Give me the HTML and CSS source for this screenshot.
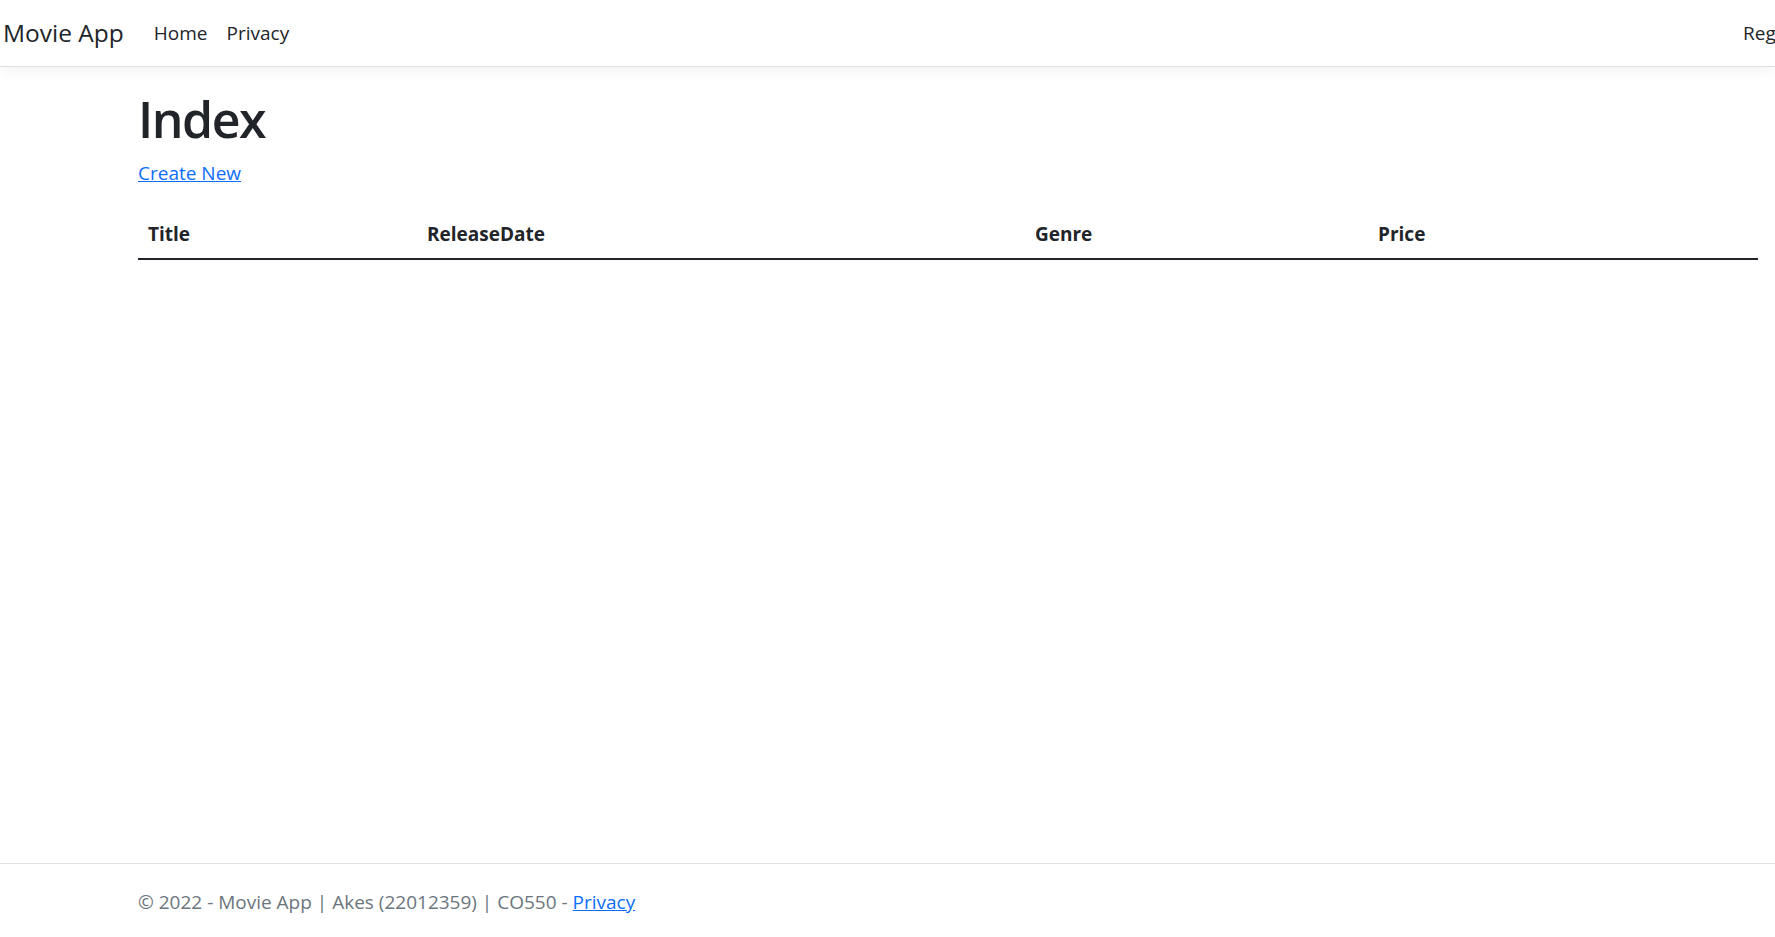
FILE: index.html
```html
<!DOCTYPE html>
<html lang="en">
<head>
<meta charset="utf-8">
<title>Index - Movie App</title>
<link rel="stylesheet" href="styles.css">
</head>
<body>
<div class="page">
  <header class="navbar">
    <a class="brand" href="#">Movie App</a>
    <nav class="nav-links">
      <a class="nav-link" href="#">Home</a>
      <a class="nav-link" href="#">Privacy</a>
    </nav>
    <div class="nav-right">
      <a class="nav-link" href="#">Register</a>
    </div>
  </header>
  <main class="main">
    <h1 class="title">Index</h1>
    <p class="create"><a href="#">Create New</a></p>
    <table class="table">
      <thead>
        <tr>
          <th class="col-title">Title</th>
          <th class="col-date">ReleaseDate</th>
          <th class="col-genre">Genre</th>
          <th class="col-price">Price</th>
        </tr>
      </thead>
      <tbody></tbody>
    </table>
  </main>
  <footer class="footer">
    <div class="footer-inner">&copy; 2022 - Movie App | Akes (22012359) | CO550 - <a href="#">Privacy</a></div>
  </footer>
</div>
</body>
</html>
```
FILE: styles.css
```css
html, body {
  margin: 0;
  padding: 0;
  overflow: hidden;
}
body {
  font-family: "Open Sans", "Noto Sans", "Liberation Sans", sans-serif;
  font-size: 19px;
  color: #212529;
  background: #fff;
  width: 1775px;
  height: 937px;
}
.page {
  display: flex;
  flex-direction: column;
  height: 937px;
}
.navbar {
  flex: 0 0 auto;
  height: 67px;
  border-bottom: 1px solid #dfdfdf;
  box-shadow: 0 4px 14px rgba(0, 0, 0, 0.05);
  display: flex;
  align-items: center;
  padding: 0 0 0 3px;
  box-sizing: border-box;
  position: relative;
  z-index: 1;
}
.brand {
  font-size: 24.5px;
  color: #212529;
  text-decoration: none;
  margin-right: 30px;
  padding-bottom: 1px;
}
.nav-links {
  display: flex;
  gap: 19px;
}
.nav-link {
  color: #212529;
  text-decoration: none;
  font-size: 19px;
}
.nav-right {
  margin-left: auto;
  width: 32px;
  overflow: hidden;
  white-space: nowrap;
}
.main {
  flex: 1 1 auto;
  padding: 0 17px 0 138px;
}
.title {
  font-size: 50px;
  font-weight: 600;
  margin: 22px 0 0 0;
  line-height: 1.2;
  letter-spacing: -1.5px;
}
.create {
  margin: 10px 0 0 0;
  line-height: 1.5;
}
.create a {
  color: #0d6efd;
}
.table {
  border-collapse: collapse;
  width: 1620px;
  margin-top: 17px;
}
.table th {
  text-align: left;
  font-weight: 700;
  padding: 15.5px 10px 9px 10px;
  border-bottom: 2px solid #212529;
  line-height: 1.5;
}
.col-title { width: 259px; }
.col-date { width: 588px; }
.col-genre { width: 323px; }
.footer {
  flex: 0 0 auto;
  height: 74px;
  border-top: 1px solid #dee2e6;
  color: #6c757d;
  box-sizing: border-box;
}
.footer-inner {
  padding: 24px 0 0 138px;
  white-space: nowrap;
  line-height: 1.5;
}
.footer a {
  color: #0d6efd;
}
```
